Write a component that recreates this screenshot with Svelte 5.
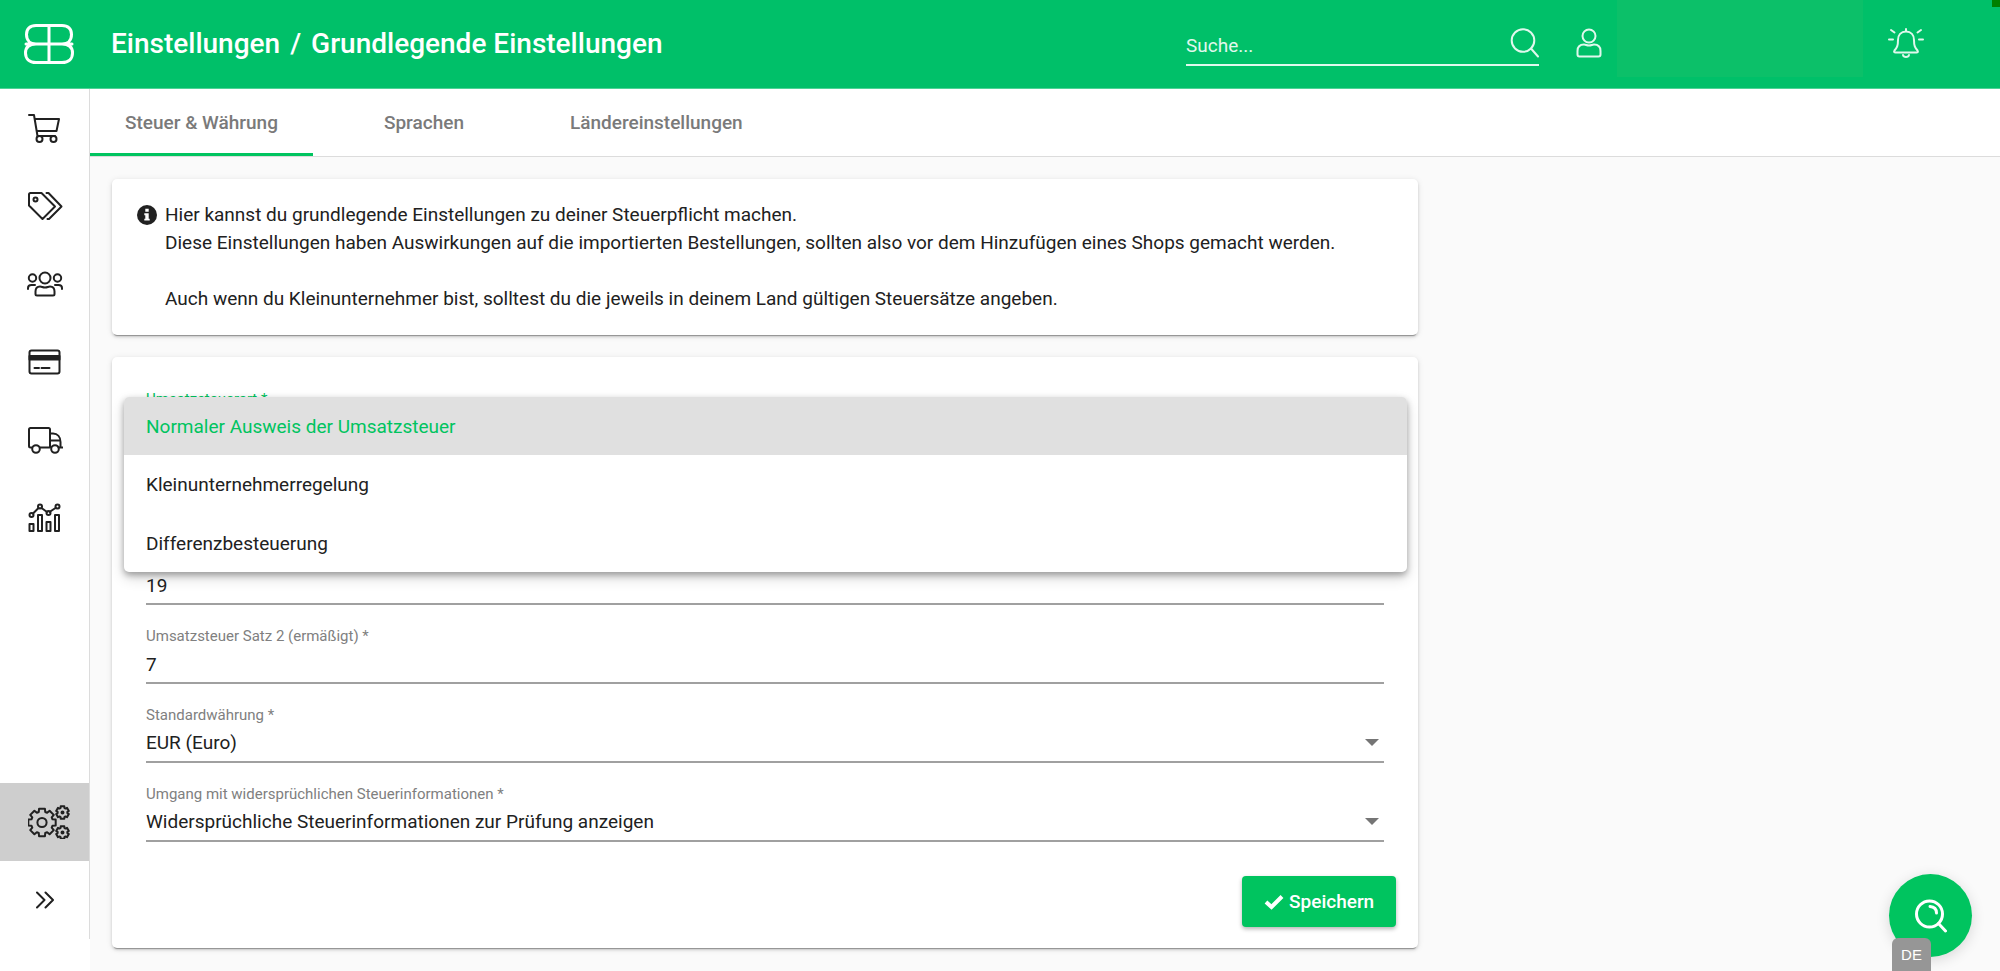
<script lang="ts">
  const navItems = [
    { id: 'cart', label: 'Bestellungen' },
    { id: 'tags', label: 'Produkte' },
    { id: 'users', label: 'Kunden' },
    { id: 'card', label: 'Zahlungen' },
    { id: 'truck', label: 'Versand' },
    { id: 'chart', label: 'Auswertungen' },
  ];
  const tabs = ['Steuer & Währung', 'Sprachen', 'Ländereinstellungen'];
  const taxTypes = ['Normaler Ausweis der Umsatzsteuer', 'Kleinunternehmerregelung', 'Differenzbesteuerung'];

  let activeTab = $state(0);
  let search = $state('');
  let taxType = $state(taxTypes[0]);
  let panelOpen = $state(true);
  let country = $state('Deutschland');
  let rate1 = $state('19');
  let rate2 = $state('7');
  let currency = $state('EUR (Euro)');
  let conflict = $state('Widersprüchliche Steuerinformationen zur Prüfung anzeigen');

  function selectTaxType(value: string) {
    taxType = value;
    panelOpen = false;
  }

  // outline of a cog wheel as a closed path
  function gear(cx: number, cy: number, inner: number, outer: number, teeth: number) {
    const step = (Math.PI * 2) / teeth;
    const points: string[] = [];
    for (let i = 0; i < teeth; i++) {
      const a = i * step - Math.PI / 2;
      for (const [offset, r] of [[-0.38, inner], [-0.27, outer], [0.27, outer], [0.38, inner]]) {
        const x = cx + r * Math.cos(a + offset * step);
        const y = cy + r * Math.sin(a + offset * step);
        points.push(`${x.toFixed(2)} ${y.toFixed(2)}`);
      }
    }
    return `M${points.join('L')}Z`;
  }
</script>

<header class="topbar">
  <a class="logo" href="#start" aria-label="Startseite">
    <svg width="50" height="40" viewBox="0 0 50 40">
      <path d="M25 1.500V38.500M2 20H48M12 1.500H38C44 1.500 47.500 5 47.500 10.500S44 20 38 20C45 20 48.500 23.500 48.500 29S45 38.500 38 38.500H12C5 38.500 1.500 34.500 1.500 29S5 20 12 20C6 20 2.500 16 2.500 10.500S6 1.500 12 1.500Z" />
    </svg>
  </a>
  <h1><span>Einstellungen</span><span>/</span><span>Grundlegende Einstellungen</span></h1>
  <form class="search" onsubmit={(e) => e.preventDefault()}>
    <input type="text" placeholder="Suche..." aria-label="Suche" bind:value={search} />
    <button type="submit" aria-label="Suchen">
      <svg width="30" height="30" viewBox="0 0 30 30">
        <circle cx="14" cy="12.500" r="11.300" />
        <path d="M22 20.500L29 28.500" />
      </svg>
    </button>
  </form>
  <button class="user" aria-label="Benutzerkonto">
    <svg width="26" height="30" viewBox="0 0 26 30">
      <circle cx="13" cy="8" r="6.500" />
      <path d="M8 16.500C3.500 16.500 1.500 19.500 1.500 23V26.500Q1.500 28.500 3.500 28.500H22.500Q24.500 28.500 24.500 26.500V23C24.500 19.500 22.500 16.500 18 16.500C16 16.500 15.500 17.500 13 17.500S10 16.500 8 16.500Z" />
    </svg>
  </button>
  <div class="account"></div>
  <button class="bell" aria-label="Benachrichtigungen">
    <svg width="36" height="30" viewBox="0 0 36 30">
      <path d="M18 1V3.500M18 3.500C13 3.500 10 7 10 12C10 18 9 19.500 6.500 22.500C5.500 24 6.500 24.500 7.500 24.500H28.500C29.500 24.500 30.500 24 29.500 22.500C27 19.500 26 18 26 12C26 7 23 3.500 18 3.500ZM15 27Q15.500 29 18 29T21 27M3 2L6.500 4.500M33 2L29.500 4.500M1 11.500H5M31 11.500H35" />
    </svg>
  </button>
  <span class="status"></span>
</header>

<div class="layout">
  <aside>
    <nav aria-label="Hauptmenü">
      {#each navItems as item}
        <a href="#{item.id}" aria-label={item.label}>
          <svg width="36" height="32" viewBox="0 0 36 32">
            {#if item.id === 'cart'}
              <path d="M2 3H7L10.500 24H28M7.500 7H32L29.500 19H9.500" />
              <circle cx="12.500" cy="27" r="3" />
              <circle cx="26.500" cy="27" r="3" />
            {:else if item.id === 'tags'}
              <path d="M3.500 3H14.500L28 16.500L15.500 29L2 15.500V4.500Q2 3 3.500 3ZM19.500 3H21.500L34.500 16.500L22 29H20.500" />
              <circle cx="8.500" cy="9.500" r="2" />
            {:else if item.id === 'users'}
              <circle cx="18" cy="10" r="5.500" />
              <circle cx="5.500" cy="10" r="3.700" />
              <circle cx="30.500" cy="10" r="3.700" />
              <path d="M13 18.500C9.500 18.500 8.500 21 8.500 23.500V26Q8.500 27.500 10 27.500H26Q27.500 27.500 27.500 26V23.500C27.500 21 26.500 18.500 23 18.500C21 18.500 20.500 19.500 18 19.500S15 18.500 13 18.500ZM1 21V20Q1 17 4.500 17H8M35 21V20Q35 17 31.500 17H28" />
            {:else if item.id === 'card'}
              <rect x="2.500" y="4.500" width="30" height="23" rx="2" />
              <path class="solid" d="M2.500 10H32.500V13.500H2.500Z" />
              <path d="M7.500 22H12M14.500 22H22.500" />
            {:else if item.id === 'truck'}
              <path d="M4.500 23.500H3.500Q2 23.500 2 22V5.500Q2 4 3.500 4H21.500Q23 4 23 5.500V23.500H13M23 9.500H26C30.500 9.500 33.500 13 33.500 18V23.500M23 16.500H33M31.500 23.500H35.500" />
              <circle cx="9" cy="25" r="3.800" />
              <circle cx="28" cy="25" r="3.800" />
            {:else}
              <path d="M2.500 22H6.500V29H2.500ZM11 13H15V29H11ZM19.500 20H23.500V29H19.500ZM28 13H32V29H28ZM6 11.500L11.500 6M14.500 6L20 10M22.500 10L28.500 6" />
              <circle cx="4.500" cy="13" r="2" />
              <circle cx="13" cy="4.500" r="2" />
              <circle cx="21.500" cy="11" r="2" />
              <circle cx="30.500" cy="4.500" r="2" />
            {/if}
          </svg>
        </a>
      {/each}
      <a class="settings" href="#settings" aria-label="Einstellungen" aria-current="page">
        <svg width="42" height="34" viewBox="0 0 42 34">
          <path d={gear(14, 17.5, 11, 14, 8)} />
          <circle cx="14" cy="17.500" r="4.600" />
          <path d={gear(34.5, 7.5, 4.9, 6.5, 6)} />
          <circle cx="34.500" cy="7.500" r="1" />
          <path d={gear(34.5, 27.5, 4.9, 6.5, 6)} />
          <circle cx="34.500" cy="27.500" r="1" />
        </svg>
      </a>
      <button aria-label="Menü ausklappen">
        <svg width="18" height="18" viewBox="0 0 18 18">
          <path d="M1 1.500L8.500 9L1 16.500M9.500 1.500L17 9L9.500 16.500" />
        </svg>
      </button>
    </nav>
  </aside>

  <main>
    <div class="tabs" role="tablist">
      {#each tabs as tab, i}
        <button role="tab" aria-selected={activeTab === i} class:active={activeTab === i} onclick={() => (activeTab = i)}>{tab}</button>
      {/each}
    </div>

    <div class="content">
      <section class="card info">
        <svg width="20" height="20" viewBox="0 0 20 20">
          <circle cx="10" cy="10" r="10" />
          <path d="M8.300 3.800H11.700V6.800H8.300ZM7.300 8.300H11.700V13.700H12.700V15.600H7.300V13.700H8.300V10.200H7.300Z" />
        </svg>
        <p>
          Hier kannst du grundlegende Einstellungen zu deiner Steuerpflicht machen.<br />
          Diese Einstellungen haben Auswirkungen auf die importierten Bestellungen, sollten also vor dem Hinzufügen eines Shops gemacht werden.<br />
          <br />
          Auch wenn du Kleinunternehmer bist, solltest du die jeweils in deinem Land gültigen Steuersätze angeben.
        </p>
      </section>

      <form class="card" onsubmit={(e) => e.preventDefault()}>
        <div class="field focused">
          <label for="tax-type">Umsatzsteuerart *</label>
          <select id="tax-type" class:covered={panelOpen} bind:value={taxType} onfocus={() => (panelOpen = true)}>
            {#each taxTypes as type}
              <option>{type}</option>
            {/each}
          </select>
          {#if panelOpen}
            <div class="panel" role="listbox" aria-label="Umsatzsteuerart">
              {#each taxTypes as type}
                <button type="button" role="option" aria-selected={type === taxType} class:selected={type === taxType} onclick={() => selectTaxType(type)}>{type}</button>
              {/each}
            </div>
          {/if}
        </div>
        <div class="field" class:covered={panelOpen}>
          <label for="country">Land *</label>
          <input id="country" type="text" bind:value={country} />
        </div>
        <div class="field">
          <label for="rate-1" class:covered={panelOpen}>Umsatzsteuer Satz 1 (normal) *</label>
          <input id="rate-1" type="text" bind:value={rate1} />
        </div>
        <div class="field">
          <label for="rate-2">Umsatzsteuer Satz 2 (ermäßigt) *</label>
          <input id="rate-2" type="text" bind:value={rate2} />
        </div>
        <div class="field">
          <label for="currency">Standardwährung *</label>
          <select id="currency" bind:value={currency}>
            <option>EUR (Euro)</option>
          </select>
          <span class="arrow"></span>
        </div>
        <div class="field">
          <label for="conflict">Umgang mit widersprüchlichen Steuerinformationen *</label>
          <select id="conflict" bind:value={conflict}>
            <option>Widersprüchliche Steuerinformationen zur Prüfung anzeigen</option>
          </select>
          <span class="arrow"></span>
        </div>
        <div class="actions">
          <button class="save" type="submit">
            <svg width="20" height="16" viewBox="0 0 20 16"><path d="M2 8L7.500 13L18 2.500" /></svg>
            Speichern
          </button>
        </div>
      </form>
    </div>
  </main>
</div>

<button class="help" aria-label="Hilfe">
  <svg width="32" height="34" viewBox="0 0 32 34">
    <circle cx="14.500" cy="15" r="13" />
    <path d="M23.500 24.500L30.500 32M15 7.500Q21.500 8 21.500 14" />
  </svg>
</button>
<button class="lang">DE</button>

<style>
  :global(body) {
    background: #fafafa;
    color: #212121;
    font: 19px/28px Roboto, sans-serif;
  }
  * { box-sizing: border-box; }
  button, input, select {
    font: inherit;
    color: inherit;
    border: 0;
    padding: 0;
    margin: 0;
    background: none;
    border-radius: 0;
    outline: none;
  }
  button { cursor: pointer; }
  svg {
    display: block;
    flex: none;
    fill: none;
    stroke: currentColor;
    stroke-width: 2;
    stroke-linejoin: round;
    stroke-linecap: round;
  }

  .topbar {
    position: relative;
    display: flex;
    align-items: flex-start;
    height: 89px;
    padding: 0 76px 0 24px;
    background: #00c069;
    border-bottom: 1px solid #4dd396;
    color: #fff;
  }
  .logo { padding-top: 24px; color: #fff; }
  .logo svg { stroke-width: 3; }
  h1 {
    display: flex;
    gap: 10px;
    margin: 0 auto 0 37px;
    font-size: 28px;
    font-weight: 500;
    line-height: 88px;
  }
  .search {
    display: flex;
    width: 353px;
    height: 66px;
    padding-top: 28px;
    border-bottom: 2px solid #e0f8ed;
  }
  .search input { flex: 1; min-width: 0; height: 34px; }
  .search input::placeholder { color: #e0f8ed; opacity: 1; }
  .search button { height: 30px; color: #e0f8ed; }
  .user { margin: 28px 15px 0 37px; color: #e0f8ed; }
  .account { width: 246px; height: 77px; background: #0cc069; }
  .bell { margin: 28px 0 0 25px; color: #e0f8ed; }
  .status {
    position: absolute;
    top: 0;
    right: 0;
    width: 8px;
    height: 7px;
    background: #008000;
  }

  .layout { display: flex; min-height: calc(100vh - 89px); }
  aside { width: 90px; flex: none; background: #fff; }
  nav {
    display: flex;
    flex-direction: column;
    height: calc(100vh - 121px);
    border-right: 1px solid #dcdcdc;
  }
  nav a, nav button {
    display: flex;
    align-items: center;
    height: 78px;
    padding-left: 27px;
    color: #212121;
  }
  nav button { padding-left: 36px; }
  .solid { fill: currentColor; }
  nav .settings { margin-top: auto; padding-left: 28px; background: #cecece; }

  main { flex: 1; min-width: 0; }
  .tabs {
    display: flex;
    height: 68px;
    background: #fff;
    border-bottom: 1px solid #dcdcdc;
  }
  .tabs button {
    min-width: 222px;
    padding: 3px 35px 0;
    border-bottom: 3px solid transparent;
    color: #7a7a7a;
    font-weight: 500;
  }
  .tabs .active { border-color: #00c45f; }
  .content {
    display: flex;
    flex-direction: column;
    gap: 22px;
    width: calc((100% - 44px) * 0.7);
    min-width: 600px;
    margin: 22px;
  }
  .card {
    padding: 32px 22px 21px;
    background: #fff;
    border-radius: 5px;
    box-shadow: 0 3px 1px -2px rgba(0, 0, 0, 0.3), 0 2px 3px rgba(0, 0, 0, 0.14), 0 1px 6px rgba(0, 0, 0, 0.1);
  }
  .info { display: flex; gap: 8px; padding: 22px 25px; }
  .info svg { margin-top: 4px; stroke: none; }
  .info circle { fill: #212121; }
  .info path { fill: #fff; }
  .info p { margin: 0; }

  .field { position: relative; margin: 0 12px 21px; }
  .field label {
    display: block;
    color: #808080;
    font-size: 15px;
    line-height: 20px;
  }
  .focused label { color: #00c45f; }
  .field input, .field select {
    display: block;
    width: 100%;
    height: 38px;
    border-bottom: 2px solid #a0a0a0;
    appearance: none;
  }
  .field .covered, .field.covered { visibility: hidden; }
  .arrow {
    position: absolute;
    right: 5px;
    bottom: 17px;
    border: 7px solid transparent;
    border-top-color: #757575;
    border-bottom: 0;
    pointer-events: none;
  }
  .panel {
    position: absolute;
    z-index: 1;
    top: 8px;
    left: -22px;
    right: -23px;
    display: flex;
    flex-direction: column;
    height: 175px;
    background: #fff;
    border-radius: 5px;
    overflow: hidden;
    box-shadow: 0 3px 6px rgba(0, 0, 0, 0.3), 0 6px 14px rgba(0, 0, 0, 0.16);
  }
  .panel button { flex: 1; padding: 2px 22px 0; text-align: left; }
  .panel .selected { background: #e0e0e0; color: #00c45f; }

  .actions { display: flex; justify-content: flex-end; margin-top: 34px; }
  .save {
    display: flex;
    align-items: center;
    gap: 5px;
    height: 51px;
    padding: 0 22px;
    background: #00c45f;
    border-radius: 4px;
    color: #fff;
    font-weight: 500;
    box-shadow: 0 2px 4px rgba(0, 0, 0, 0.3);
  }
  .save svg { stroke-width: 4; stroke-linecap: butt; stroke-linejoin: miter; }

  .help {
    position: fixed;
    right: 28px;
    bottom: 14px;
    display: flex;
    align-items: center;
    justify-content: center;
    width: 83px;
    height: 83px;
    background: #00c45f;
    border-radius: 50%;
    color: #fff;
    box-shadow: 0 3px 14px rgba(0, 0, 0, 0.14);
  }
  .help svg { stroke-width: 3; }
  .lang {
    position: fixed;
    right: 69px;
    bottom: 0;
    width: 39px;
    height: 33px;
    background: #969696;
    border-radius: 6px 6px 0 0;
    color: #fff;
    font-size: 15px;
    font-family: "Liberation Sans", Arial, sans-serif;
  }
</style>
